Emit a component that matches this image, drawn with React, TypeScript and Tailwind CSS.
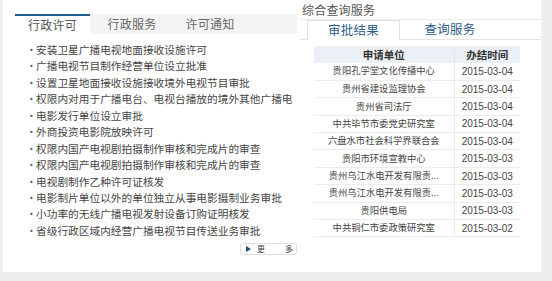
import React from 'react'

const cjk = { fontFamily: '"Noto Sans CJK SC", "Liberation Sans", sans-serif' }

const xuke = [
  '安装卫星广播电视地面接收设施许可',
  '广播电视节目制作经营单位设立批准',
  '设置卫星地面接收设施接收境外电视节目审批',
  '权限内对用于广播电台、电视台播放的境外其他广播电',
  '电影发行单位设立审批',
  '外商投资电影院放映许可',
  '权限内国产电视剧拍摄制作审核和完成片的审查',
  '权限内国产电视剧拍摄制作审核和完成片的审查',
  '电视剧制作乙种许可证核发',
  '电影制片单位以外的单位独立从事电影摄制业务审批',
  '小功率的无线广播电视发射设备订购证明核发',
  '省级行政区域内经营广播电视节目传送业务审批',
]

const jieguo = [
  ['贵阳孔学堂文化传播中心', '2015-03-04'],
  ['贵州省建设监理协会', '2015-03-04'],
  ['贵州省司法厅', '2015-03-04'],
  ['中共毕节市委党史研究室', '2015-03-04'],
  ['六盘水市社会科学界联合会', '2015-03-04'],
  ['贵阳市环境宣教中心', '2015-03-03'],
  ['贵州乌江水电开发有限责...', '2015-03-03'],
  ['贵州乌江水电开发有限责...', '2015-03-03'],
  ['贵阳供电局', '2015-03-03'],
  ['中共铜仁市委政策研究室', '2015-03-02'],
]

export default function App() {
  return (
    <div className="w-[552px] h-[281px] bg-[#eeeeee]" style={cjk}>
      <div className="ml-[3px] w-[538px] h-[272px] bg-white flex">
        {/* 左侧：行政许可 */}
        <div className="w-[294px] pt-[14px]">
          <div className="flex h-[20px] text-[12px] text-[#555]">
            <div className="w-[12px] bg-white" />
            <div className="w-[75px] bg-white border-t-2 border-[#1f5c8f] flex items-center justify-center tracking-[0.3px]">行政许可</div>
            <div className="flex-1 flex bg-[#f4f4f4]">
              <div className="w-[84px] flex items-center justify-center tracking-[0.3px] text-[#666]">行政服务</div>
              <div className="w-[72px] flex items-center justify-center tracking-[0.3px] text-[#666]">许可通知</div>
            </div>
          </div>
          <ul className="pt-[8px] pl-[23px] pr-[4px]">
            {xuke.map((t, i) => (
              <li key={i} className="flex leading-[16.45px] h-[16.45px] text-[10.7px] text-[#444] whitespace-nowrap">
                <span className="w-[10px] shrink-0 text-[#666]">·</span>
                <span>{t}</span>
              </li>
            ))}
          </ul>
          <div className="flex justify-end mt-[4px]">
            <button className="w-[57px] h-[12px] border border-[#dddddd] rounded-[3px] bg-white flex items-center text-[8px] text-[#444] leading-none">
              <span className="ml-[5px] w-0 h-0 border-y-[3px] border-y-transparent border-l-[5px] border-l-[#1f4f86]" />
              <span className="ml-[6px]">更</span>
              <span className="ml-[20px]">多</span>
            </button>
          </div>
        </div>

        {/* 右侧：综合查询服务 */}
        <div className="flex-1 pl-[3px]">
          <div className="h-[20px] border-b border-[#ececec] flex items-center pl-[2px] text-[12px] text-[#555] tracking-[0.2px]">综合查询服务</div>
          <div className="flex h-[20px] border-b border-[#e3e3e3] text-[12.5px] text-[#2d5d8a]">
            <div className="w-[7px]" />
            <div className="w-[93px] -mb-px bg-white border border-b-0 border-[#e0e0e0] flex items-center justify-center tracking-[0.3px]">审批结果</div>
            <div className="w-[100px] flex items-center justify-center tracking-[0.3px]">查询服务</div>
          </div>
          <table className="ml-[14px] mt-[6px] w-[206px] border-collapse text-[#333]">
            <thead>
              <tr className="bg-[#eaf0f5] h-[17px] text-[10.5px] font-bold">
                <th className="w-[140px] border-r border-[#e4e4e4] font-bold">申请单位</th>
                <th className="font-bold">办结时间</th>
              </tr>
            </thead>
            <tbody>
              {jieguo.map(([danwei, riqi], i) => (
                <tr key={i} className="h-[17.4px] border-b border-[#ececec]">
                  <td className="border-r border-[#ececec] text-center text-[9.3px] text-[#444] whitespace-nowrap p-0">{danwei}</td>
                  <td className="text-center text-[10px] text-[#444] p-0" style={{ fontFamily: '"Liberation Sans", sans-serif' }}>{riqi}</td>
                </tr>
              ))}
            </tbody>
          </table>
        </div>
      </div>
    </div>
  )
}
